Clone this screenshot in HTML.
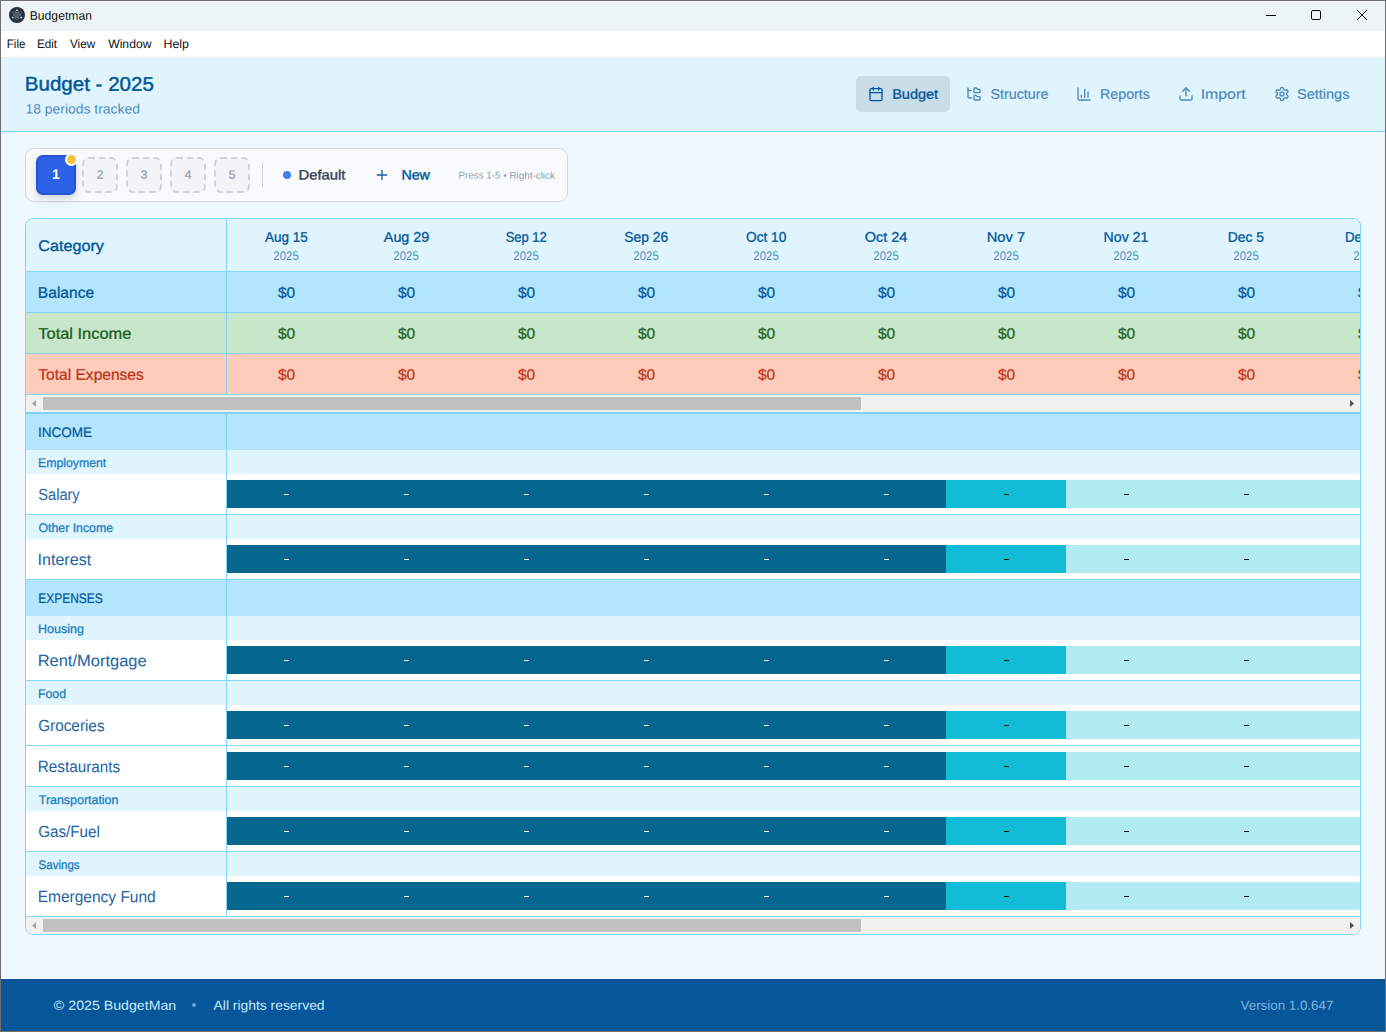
<!DOCTYPE html>
<html><head><meta charset="utf-8"><title>Budgetman</title>
<style>
html,body{margin:0;padding:0}
body{width:1386px;height:1032px;position:relative;overflow:hidden;background:#f0f8ff;font-family:"Liberation Sans",sans-serif}
div,svg,span{position:absolute}
text{white-space:pre}
</style></head><body>
<div style="left:0px;top:0px;width:1386px;height:1032px;background:#6f6f6f;"></div>
<div style="left:1px;top:1px;width:1384px;height:30px;background:#ecf4f8;"></div>
<div style="left:1px;top:1px;width:1384px;height:1px;background:#f2f8fb;"></div>
<div style="left:1px;top:1px;width:1px;height:30px;background:#f1f7fb;"></div>
<div style="left:1384px;top:1px;width:1px;height:30px;background:#f1f7fb;"></div>
<div style="left:1px;top:31px;width:1384px;height:26px;background:#ffffff;"></div>
<div style="left:1px;top:57px;width:1384px;height:74px;background:#e0f4fd;"></div>
<div style="left:1px;top:131px;width:1384px;height:1px;background:#81d4fa;"></div>
<div style="left:1px;top:132px;width:1384px;height:847px;background:#f0f8ff;"></div>
<div style="left:1px;top:979px;width:1384px;height:52px;background:#065699;"></div>
<svg style="left:9px;top:7px" width="16" height="16" viewBox="0 0 16 16">
<circle cx="8" cy="8" r="8" fill="#2b2d3a"/>
<g fill="none" stroke="#8fbfca" stroke-width="0.55" opacity="0.7">
<ellipse cx="8" cy="8" rx="5.1" ry="1.9" transform="rotate(30 8 8)"/>
<ellipse cx="8" cy="8" rx="5.1" ry="1.9" transform="rotate(90 8 8)"/>
<ellipse cx="8" cy="8" rx="5.1" ry="1.9" transform="rotate(150 8 8)"/>
</g><g fill="#bfe9f2"><circle cx="7.9" cy="3.3" r="0.85"/><circle cx="3.7" cy="10.5" r="0.85"/><circle cx="12.3" cy="10.6" r="0.85"/></g>
<circle cx="8" cy="8" r="0.75" fill="#7fa9b4"/></svg>
<svg style="left:1260px;top:5px" width="120" height="22" viewBox="0 0 120 22" fill="none" stroke="#000" stroke-width="1"><path d="M6 10.5h10"/><rect x="51.5" y="5.5" width="9" height="9" rx="1.3"/><path d="M97 5l10 10M107 5l-10 10"/></svg>
<div style="left:856px;top:76px;width:94px;height:36px;background:#c9dde8;border-radius:5px;"></div>
<svg style="left:868px;top:86px" width="16" height="16" viewBox="0 0 24 24" fill="none" stroke="#01579b" stroke-width="2" stroke-linecap="round" stroke-linejoin="round"><path d="M8 2v4"/><path d="M16 2v4"/><rect width="18" height="18" x="3" y="4" rx="2"/><path d="M3 10h18"/></svg>
<svg style="left:966px;top:86px" width="16" height="16" viewBox="0 0 24 24" fill="none" stroke="#4a89c0" stroke-width="2" stroke-linecap="round" stroke-linejoin="round"><path d="M20 10a1 1 0 0 0 1-1V6a1 1 0 0 0-1-1h-2.5a1 1 0 0 1-.8-.4l-.9-1.2A1 1 0 0 0 15 3h-2a1 1 0 0 0-1 1v5a1 1 0 0 0 1 1Z"/><path d="M20 21a1 1 0 0 0 1-1v-3a1 1 0 0 0-1-1h-2.9a1 1 0 0 1-.88-.55l-.42-.85a1 1 0 0 0-.92-.6H13a1 1 0 0 0-1 1v5a1 1 0 0 0 1 1Z"/><path d="M3 5a2 2 0 0 0 2 2h3"/><path d="M3 3v13a2 2 0 0 0 2 2h3"/></svg>
<svg style="left:1076px;top:86px" width="16" height="16" viewBox="0 0 24 24" fill="none" stroke="#4a89c0" stroke-width="2" stroke-linecap="round" stroke-linejoin="round"><path d="M3 3v16a2 2 0 0 0 2 2h16"/><path d="M18 17V9"/><path d="M13 17V5"/><path d="M8 17v-3"/></svg>
<svg style="left:1178px;top:86px" width="16" height="16" viewBox="0 0 24 24" fill="none" stroke="#4a89c0" stroke-width="2" stroke-linecap="round" stroke-linejoin="round"><path d="M21 15v4a2 2 0 0 1-2 2H5a2 2 0 0 1-2-2v-4"/><polyline points="17 8 12 3 7 8"/><line x1="12" x2="12" y1="3" y2="15"/></svg>
<svg style="left:1274px;top:86px" width="16" height="16" viewBox="0 0 24 24" fill="none" stroke="#4a89c0" stroke-width="2" stroke-linecap="round" stroke-linejoin="round"><path d="M12.22 2h-.44a2 2 0 0 0-2 2v.18a2 2 0 0 1-1 1.73l-.43.25a2 2 0 0 1-2 0l-.15-.08a2 2 0 0 0-2.73.73l-.22.38a2 2 0 0 0 .73 2.73l.15.1a2 2 0 0 1 1 1.72v.51a2 2 0 0 1-1 1.74l-.15.09a2 2 0 0 0-.73 2.73l.22.38a2 2 0 0 0 2.73.73l.15-.08a2 2 0 0 1 2 0l.43.25a2 2 0 0 1 1 1.73V20a2 2 0 0 0 2 2h.44a2 2 0 0 0 2-2v-.18a2 2 0 0 1 1-1.73l.43-.25a2 2 0 0 1 2 0l.15.08a2 2 0 0 0 2.73-.73l.22-.39a2 2 0 0 0-.73-2.73l-.15-.08a2 2 0 0 1-1-1.74v-.5a2 2 0 0 1 1-1.74l.15-.09a2 2 0 0 0 .73-2.73l-.22-.38a2 2 0 0 0-2.73-.73l-.15.08a2 2 0 0 1-2 0l-.43-.25a2 2 0 0 1-1-1.73V4a2 2 0 0 0-2-2z"/><circle cx="12" cy="12" r="3"/></svg>
<div style="left:25px;top:148px;width:543px;height:54px;background:#f8fafc;border:1px solid #d5dae1;border-radius:9px;box-sizing:border-box;"></div>
<div style="left:36px;top:155px;width:40px;height:40px;background:#2b62e6;border:2px solid #2453d8;border-radius:7px;box-sizing:border-box;box-shadow:0 5px 12px rgba(30,40,70,.12),0 2px 4px rgba(30,40,70,.07);"></div>
<div style="left:64.8px;top:152.9px;width:13.200000000000003px;height:13.199999999999989px;background:#f2c53d;border:2.2px solid #fff;border-radius:50%;box-sizing:border-box;"></div>
<div style="left:82px;top:157px;width:36px;height:36px;background:#f3f4f6;border:2px dashed #cfd3da;border-radius:7px;box-sizing:border-box;"></div>
<div style="left:126px;top:157px;width:36px;height:36px;background:#f3f4f6;border:2px dashed #cfd3da;border-radius:7px;box-sizing:border-box;"></div>
<div style="left:170px;top:157px;width:36px;height:36px;background:#f3f4f6;border:2px dashed #cfd3da;border-radius:7px;box-sizing:border-box;"></div>
<div style="left:214px;top:157px;width:36px;height:36px;background:#f3f4f6;border:2px dashed #cfd3da;border-radius:7px;box-sizing:border-box;"></div>
<div style="left:262px;top:163px;width:1px;height:24px;background:#d1d5db;"></div>
<div style="left:283px;top:171px;width:8px;height:8px;background:#3b82f6;border-radius:50%;"></div>
<svg style="left:374px;top:167px" width="16" height="16" viewBox="0 0 24 24" fill="none" stroke="#1a5c9c" stroke-width="2" stroke-linecap="round" stroke-linejoin="round"><path d="M5 12h14"/><path d="M12 5v14"/></svg>
<svg class="tl" style="left:0;top:0" width="1386" height="1032"><text id="t1" x="29.70" y="19.80" font-size="12.2" fill="#111" transform="rotate(0.04 29.7 19.8)">Budgetman</text><text id="t2" x="6.75" y="48.00" font-size="12.2" fill="#111" transform="rotate(0.04 6.7 48.0)" textLength="18.67" lengthAdjust="spacingAndGlyphs">File</text><text id="t3" x="36.94" y="48.00" font-size="12.2" fill="#111" transform="rotate(0.04 36.9 48.0)" textLength="20.15" lengthAdjust="spacingAndGlyphs">Edit</text><text id="t4" x="69.95" y="48.00" font-size="12.2" fill="#111" transform="rotate(0.04 69.9 48.0)" textLength="25.22" lengthAdjust="spacingAndGlyphs">View</text><text id="t5" x="108.15" y="48.00" font-size="12.2" fill="#111" transform="rotate(0.04 108.1 48.0)">Window</text><text id="t6" x="163.48" y="48.00" font-size="12.2" fill="#111" transform="rotate(0.04 163.5 48.0)" textLength="25.44" lengthAdjust="spacingAndGlyphs">Help</text><text id="t7" x="24.85" y="90.60" font-size="19.8" fill="#01579b" transform="rotate(0.04 24.8 90.6)" stroke="#01579b" stroke-width="0.45" textLength="128.98" lengthAdjust="spacingAndGlyphs">Budget - 2025</text><text id="t8" x="25.54" y="113.40" font-size="13.5" fill="#4f8bc1" transform="rotate(0.04 25.5 113.4)" textLength="114.35" lengthAdjust="spacingAndGlyphs">18 periods tracked</text><text id="t9" x="892.18" y="98.80" font-size="13.7" fill="#01579b" transform="rotate(0.04 892.2 98.8)" stroke="#01579b" stroke-width="0.32" textLength="45.96" lengthAdjust="spacingAndGlyphs">Budget</text><text id="t10" x="990.45" y="98.80" font-size="13.8" fill="#4a89c0" transform="rotate(0.04 990.5 98.8)" stroke="#4a89c0" stroke-width="0.2" textLength="58.08" lengthAdjust="spacingAndGlyphs">Structure</text><text id="t11" x="1100.14" y="98.80" font-size="13.8" fill="#4a89c0" transform="rotate(0.04 1100.1 98.8)" stroke="#4a89c0" stroke-width="0.2" textLength="49.67" lengthAdjust="spacingAndGlyphs">Reports</text><text id="t12" x="1200.65" y="98.80" font-size="13.8" fill="#4a89c0" transform="rotate(0.04 1200.7 98.8)" stroke="#4a89c0" stroke-width="0.2" textLength="44.95" lengthAdjust="spacingAndGlyphs">Import</text><text id="t13" x="1297.05" y="98.80" font-size="13.8" fill="#4a89c0" transform="rotate(0.04 1297.0 98.8)" stroke="#4a89c0" stroke-width="0.2" textLength="52.37" lengthAdjust="spacingAndGlyphs">Settings</text><text id="t14" x="51.89" y="179.00" font-size="13.9" fill="#fff" transform="rotate(0.04 51.9 179.0)" font-weight="700">1</text><text id="t15" x="96.64" y="178.80" font-size="12.1" fill="#9ca3af" transform="rotate(0.04 96.6 178.8)" stroke="#9ca3af" stroke-width="0.3">2</text><text id="t16" x="140.67" y="178.80" font-size="12.1" fill="#9ca3af" transform="rotate(0.04 140.7 178.8)" stroke="#9ca3af" stroke-width="0.3">3</text><text id="t17" x="184.68" y="178.80" font-size="12.1" fill="#9ca3af" transform="rotate(0.04 184.7 178.8)" stroke="#9ca3af" stroke-width="0.3">4</text><text id="t18" x="228.65" y="178.80" font-size="12.1" fill="#9ca3af" transform="rotate(0.04 228.6 178.8)" stroke="#9ca3af" stroke-width="0.3">5</text><text id="t19" x="298.59" y="179.50" font-size="13.7" fill="#374151" transform="rotate(0.04 298.6 179.5)" stroke="#374151" stroke-width="0.38" textLength="46.81" lengthAdjust="spacingAndGlyphs">Default</text><text id="t20" x="401.43" y="179.50" font-size="13.7" fill="#01579b" transform="rotate(0.04 401.4 179.5)" stroke="#01579b" stroke-width="0.38" textLength="28.44" lengthAdjust="spacingAndGlyphs">New</text><text id="t21" x="458.49" y="178.60" font-size="9.8" fill="#979eab" transform="rotate(0.04 458.5 178.6)" textLength="96.39" lengthAdjust="spacingAndGlyphs">Press 1-5 • Right-click</text></svg>
<div style="left:25px;top:218px;width:1336px;height:717px;border:1px solid #81d4fa;border-radius:8px;box-sizing:border-box;overflow:hidden;background:#fff">
<div style="left:-26px;top:-219px;width:1386px;height:1032px">
<div style="left:26px;top:219px;width:1334px;height:52px;background:#e0f4fd;"></div>
<div style="left:26px;top:271px;width:1334px;height:1px;background:#81d4fa;"></div>
<div style="left:26px;top:272px;width:1334px;height:40px;background:#b3e5fc;"></div>
<div style="left:26px;top:312px;width:1334px;height:1px;background:#81d4fa;"></div>
<div style="left:26px;top:313px;width:1334px;height:40px;background:#c8e6c9;"></div>
<div style="left:26px;top:353px;width:1334px;height:1px;background:#81d4fa;"></div>
<div style="left:26px;top:354px;width:1334px;height:40px;background:#ffccbc;"></div>
<div style="left:26px;top:394px;width:1334px;height:1px;background:#81d4fa;"></div>
<div style="left:26px;top:395px;width:1334px;height:17px;background:#f1f1f1;"></div>
<div style="left:43px;top:397px;width:818px;height:13px;background:#c1c1c1;"></div>
<svg style="left:31px;top:399px" width="6" height="9" viewBox="0 0 6 9"><path d="M5 1v7L1 4.5z" fill="#a3a3a3"/></svg>
<svg style="left:1349px;top:399px" width="6" height="9" viewBox="0 0 6 9"><path d="M1 1v7L5 4.5z" fill="#505050"/></svg>
<div style="left:26px;top:412px;width:1334px;height:2px;background:#7fd3f8;"></div>
<div style="left:26px;top:414px;width:1334px;height:36px;background:#b3e5fc;"></div>
<div style="left:26px;top:450px;width:1334px;height:24px;background:#e1f5fe;"></div>
<div style="left:26px;top:474px;width:1334px;height:40px;background:#fff;"></div>
<div style="left:227px;top:480px;width:719px;height:28px;background:#06688f;"></div>
<div style="left:946px;top:480px;width:120px;height:28px;background:#12bbd6;"></div>
<div style="left:1066px;top:480px;width:294px;height:28px;background:#b2ebf2;"></div>
<div style="left:284px;top:494px;width:5px;height:1px;background:#f6fbfd;"></div>
<div style="left:404px;top:494px;width:5px;height:1px;background:#f6fbfd;"></div>
<div style="left:524px;top:494px;width:5px;height:1px;background:#f6fbfd;"></div>
<div style="left:644px;top:494px;width:5px;height:1px;background:#f6fbfd;"></div>
<div style="left:764px;top:494px;width:5px;height:1px;background:#f6fbfd;"></div>
<div style="left:884px;top:494px;width:5px;height:1px;background:#f6fbfd;"></div>
<div style="left:1004px;top:494px;width:4.600000000000023px;height:1px;background:#06181c;"></div>
<div style="left:1124px;top:494px;width:4.599999999999909px;height:1px;background:#06181c;"></div>
<div style="left:1244px;top:494px;width:4.599999999999909px;height:1px;background:#06181c;"></div>
<div style="left:1364px;top:494px;width:4.599999999999909px;height:1px;background:#06181c;"></div>
<div style="left:26px;top:514px;width:1334px;height:1px;background:#81d4fa;"></div>
<div style="left:26px;top:515px;width:1334px;height:24px;background:#e1f5fe;"></div>
<div style="left:26px;top:539px;width:1334px;height:40px;background:#fff;"></div>
<div style="left:227px;top:545px;width:719px;height:28px;background:#06688f;"></div>
<div style="left:946px;top:545px;width:120px;height:28px;background:#12bbd6;"></div>
<div style="left:1066px;top:545px;width:294px;height:28px;background:#b2ebf2;"></div>
<div style="left:284px;top:559px;width:5px;height:1px;background:#f6fbfd;"></div>
<div style="left:404px;top:559px;width:5px;height:1px;background:#f6fbfd;"></div>
<div style="left:524px;top:559px;width:5px;height:1px;background:#f6fbfd;"></div>
<div style="left:644px;top:559px;width:5px;height:1px;background:#f6fbfd;"></div>
<div style="left:764px;top:559px;width:5px;height:1px;background:#f6fbfd;"></div>
<div style="left:884px;top:559px;width:5px;height:1px;background:#f6fbfd;"></div>
<div style="left:1004px;top:559px;width:4.600000000000023px;height:1px;background:#06181c;"></div>
<div style="left:1124px;top:559px;width:4.599999999999909px;height:1px;background:#06181c;"></div>
<div style="left:1244px;top:559px;width:4.599999999999909px;height:1px;background:#06181c;"></div>
<div style="left:1364px;top:559px;width:4.599999999999909px;height:1px;background:#06181c;"></div>
<div style="left:26px;top:579px;width:1334px;height:1px;background:#81d4fa;"></div>
<div style="left:26px;top:580px;width:1334px;height:36px;background:#b3e5fc;"></div>
<div style="left:26px;top:616px;width:1334px;height:24px;background:#e1f5fe;"></div>
<div style="left:26px;top:640px;width:1334px;height:40px;background:#fff;"></div>
<div style="left:227px;top:646px;width:719px;height:28px;background:#06688f;"></div>
<div style="left:946px;top:646px;width:120px;height:28px;background:#12bbd6;"></div>
<div style="left:1066px;top:646px;width:294px;height:28px;background:#b2ebf2;"></div>
<div style="left:284px;top:660px;width:5px;height:1px;background:#f6fbfd;"></div>
<div style="left:404px;top:660px;width:5px;height:1px;background:#f6fbfd;"></div>
<div style="left:524px;top:660px;width:5px;height:1px;background:#f6fbfd;"></div>
<div style="left:644px;top:660px;width:5px;height:1px;background:#f6fbfd;"></div>
<div style="left:764px;top:660px;width:5px;height:1px;background:#f6fbfd;"></div>
<div style="left:884px;top:660px;width:5px;height:1px;background:#f6fbfd;"></div>
<div style="left:1004px;top:660px;width:4.600000000000023px;height:1px;background:#06181c;"></div>
<div style="left:1124px;top:660px;width:4.599999999999909px;height:1px;background:#06181c;"></div>
<div style="left:1244px;top:660px;width:4.599999999999909px;height:1px;background:#06181c;"></div>
<div style="left:1364px;top:660px;width:4.599999999999909px;height:1px;background:#06181c;"></div>
<div style="left:26px;top:680px;width:1334px;height:1px;background:#81d4fa;"></div>
<div style="left:26px;top:681px;width:1334px;height:24px;background:#e1f5fe;"></div>
<div style="left:26px;top:705px;width:1334px;height:40px;background:#fff;"></div>
<div style="left:227px;top:711px;width:719px;height:28px;background:#06688f;"></div>
<div style="left:946px;top:711px;width:120px;height:28px;background:#12bbd6;"></div>
<div style="left:1066px;top:711px;width:294px;height:28px;background:#b2ebf2;"></div>
<div style="left:284px;top:725px;width:5px;height:1px;background:#f6fbfd;"></div>
<div style="left:404px;top:725px;width:5px;height:1px;background:#f6fbfd;"></div>
<div style="left:524px;top:725px;width:5px;height:1px;background:#f6fbfd;"></div>
<div style="left:644px;top:725px;width:5px;height:1px;background:#f6fbfd;"></div>
<div style="left:764px;top:725px;width:5px;height:1px;background:#f6fbfd;"></div>
<div style="left:884px;top:725px;width:5px;height:1px;background:#f6fbfd;"></div>
<div style="left:1004px;top:725px;width:4.600000000000023px;height:1px;background:#06181c;"></div>
<div style="left:1124px;top:725px;width:4.599999999999909px;height:1px;background:#06181c;"></div>
<div style="left:1244px;top:725px;width:4.599999999999909px;height:1px;background:#06181c;"></div>
<div style="left:1364px;top:725px;width:4.599999999999909px;height:1px;background:#06181c;"></div>
<div style="left:26px;top:745px;width:1334px;height:1px;background:#81d4fa;"></div>
<div style="left:26px;top:746px;width:1334px;height:40px;background:#fff;"></div>
<div style="left:227px;top:752px;width:719px;height:28px;background:#06688f;"></div>
<div style="left:946px;top:752px;width:120px;height:28px;background:#12bbd6;"></div>
<div style="left:1066px;top:752px;width:294px;height:28px;background:#b2ebf2;"></div>
<div style="left:284px;top:766px;width:5px;height:1px;background:#f6fbfd;"></div>
<div style="left:404px;top:766px;width:5px;height:1px;background:#f6fbfd;"></div>
<div style="left:524px;top:766px;width:5px;height:1px;background:#f6fbfd;"></div>
<div style="left:644px;top:766px;width:5px;height:1px;background:#f6fbfd;"></div>
<div style="left:764px;top:766px;width:5px;height:1px;background:#f6fbfd;"></div>
<div style="left:884px;top:766px;width:5px;height:1px;background:#f6fbfd;"></div>
<div style="left:1004px;top:766px;width:4.600000000000023px;height:1px;background:#06181c;"></div>
<div style="left:1124px;top:766px;width:4.599999999999909px;height:1px;background:#06181c;"></div>
<div style="left:1244px;top:766px;width:4.599999999999909px;height:1px;background:#06181c;"></div>
<div style="left:1364px;top:766px;width:4.599999999999909px;height:1px;background:#06181c;"></div>
<div style="left:26px;top:786px;width:1334px;height:1px;background:#81d4fa;"></div>
<div style="left:26px;top:787px;width:1334px;height:24px;background:#e1f5fe;"></div>
<div style="left:26px;top:811px;width:1334px;height:40px;background:#fff;"></div>
<div style="left:227px;top:817px;width:719px;height:28px;background:#06688f;"></div>
<div style="left:946px;top:817px;width:120px;height:28px;background:#12bbd6;"></div>
<div style="left:1066px;top:817px;width:294px;height:28px;background:#b2ebf2;"></div>
<div style="left:284px;top:831px;width:5px;height:1px;background:#f6fbfd;"></div>
<div style="left:404px;top:831px;width:5px;height:1px;background:#f6fbfd;"></div>
<div style="left:524px;top:831px;width:5px;height:1px;background:#f6fbfd;"></div>
<div style="left:644px;top:831px;width:5px;height:1px;background:#f6fbfd;"></div>
<div style="left:764px;top:831px;width:5px;height:1px;background:#f6fbfd;"></div>
<div style="left:884px;top:831px;width:5px;height:1px;background:#f6fbfd;"></div>
<div style="left:1004px;top:831px;width:4.600000000000023px;height:1px;background:#06181c;"></div>
<div style="left:1124px;top:831px;width:4.599999999999909px;height:1px;background:#06181c;"></div>
<div style="left:1244px;top:831px;width:4.599999999999909px;height:1px;background:#06181c;"></div>
<div style="left:1364px;top:831px;width:4.599999999999909px;height:1px;background:#06181c;"></div>
<div style="left:26px;top:851px;width:1334px;height:1px;background:#81d4fa;"></div>
<div style="left:26px;top:852px;width:1334px;height:24px;background:#e1f5fe;"></div>
<div style="left:26px;top:876px;width:1334px;height:40px;background:#fff;"></div>
<div style="left:227px;top:882px;width:719px;height:28px;background:#06688f;"></div>
<div style="left:946px;top:882px;width:120px;height:28px;background:#12bbd6;"></div>
<div style="left:1066px;top:882px;width:294px;height:28px;background:#b2ebf2;"></div>
<div style="left:284px;top:896px;width:5px;height:1px;background:#f6fbfd;"></div>
<div style="left:404px;top:896px;width:5px;height:1px;background:#f6fbfd;"></div>
<div style="left:524px;top:896px;width:5px;height:1px;background:#f6fbfd;"></div>
<div style="left:644px;top:896px;width:5px;height:1px;background:#f6fbfd;"></div>
<div style="left:764px;top:896px;width:5px;height:1px;background:#f6fbfd;"></div>
<div style="left:884px;top:896px;width:5px;height:1px;background:#f6fbfd;"></div>
<div style="left:1004px;top:896px;width:4.600000000000023px;height:1px;background:#06181c;"></div>
<div style="left:1124px;top:896px;width:4.599999999999909px;height:1px;background:#06181c;"></div>
<div style="left:1244px;top:896px;width:4.599999999999909px;height:1px;background:#06181c;"></div>
<div style="left:1364px;top:896px;width:4.599999999999909px;height:1px;background:#06181c;"></div>
<div style="left:26px;top:916px;width:1334px;height:1px;background:#81d4fa;"></div>
<div style="left:226px;top:219px;width:1px;height:176px;background:#81d4fa;"></div>
<div style="left:226px;top:414px;width:1px;height:503px;background:#81d4fa;"></div>
<div style="left:26px;top:917px;width:1334px;height:17px;background:#f1f1f1;"></div>
<div style="left:43px;top:919px;width:818px;height:13px;background:#c1c1c1;"></div>
<svg style="left:31px;top:921px" width="6" height="9" viewBox="0 0 6 9"><path d="M5 1v7L1 4.5z" fill="#a3a3a3"/></svg>
<svg style="left:1349px;top:921px" width="6" height="9" viewBox="0 0 6 9"><path d="M1 1v7L5 4.5z" fill="#505050"/></svg>
<svg class="tl" style="left:0;top:0" width="1386" height="1032"><text id="t22" x="38.25" y="251.00" font-size="15.4" fill="#01579b" transform="rotate(0.04 38.3 251.0)" stroke="#01579b" stroke-width="0.33" textLength="65.71" lengthAdjust="spacingAndGlyphs">Category</text><text id="t23" x="265.12" y="241.70" font-size="14.0" fill="#01579b" transform="rotate(0.04 265.1 241.7)" stroke="#01579b" stroke-width="0.3" textLength="42.70" lengthAdjust="spacingAndGlyphs">Aug 15</text><text id="t24" x="273.33" y="260.00" font-size="12.5" fill="#4f8bc1" transform="rotate(0.04 273.3 260.0)" textLength="25.44" lengthAdjust="spacingAndGlyphs">2025</text><text id="t25" x="383.83" y="241.70" font-size="14.0" fill="#01579b" transform="rotate(0.04 383.8 241.7)" stroke="#01579b" stroke-width="0.3" textLength="45.40" lengthAdjust="spacingAndGlyphs">Aug 29</text><text id="t26" x="393.33" y="260.00" font-size="12.5" fill="#4f8bc1" transform="rotate(0.04 393.3 260.0)" textLength="25.44" lengthAdjust="spacingAndGlyphs">2025</text><text id="t27" x="505.65" y="241.70" font-size="14.0" fill="#01579b" transform="rotate(0.04 505.6 241.7)" stroke="#01579b" stroke-width="0.3" textLength="41.16" lengthAdjust="spacingAndGlyphs">Sep 12</text><text id="t28" x="513.33" y="260.00" font-size="12.5" fill="#4f8bc1" transform="rotate(0.04 513.3 260.0)" textLength="25.44" lengthAdjust="spacingAndGlyphs">2025</text><text id="t29" x="624.27" y="241.70" font-size="14.0" fill="#01579b" transform="rotate(0.04 624.3 241.7)" stroke="#01579b" stroke-width="0.3" textLength="43.84" lengthAdjust="spacingAndGlyphs">Sep 26</text><text id="t30" x="633.33" y="260.00" font-size="12.5" fill="#4f8bc1" transform="rotate(0.04 633.3 260.0)" textLength="25.44" lengthAdjust="spacingAndGlyphs">2025</text><text id="t31" x="746.00" y="241.70" font-size="14.0" fill="#01579b" transform="rotate(0.04 746.0 241.7)" stroke="#01579b" stroke-width="0.3" textLength="40.29" lengthAdjust="spacingAndGlyphs">Oct 10</text><text id="t32" x="753.33" y="260.00" font-size="12.5" fill="#4f8bc1" transform="rotate(0.04 753.3 260.0)" textLength="25.44" lengthAdjust="spacingAndGlyphs">2025</text><text id="t33" x="864.67" y="241.70" font-size="14.0" fill="#01579b" transform="rotate(0.04 864.7 241.7)" stroke="#01579b" stroke-width="0.3" textLength="42.80" lengthAdjust="spacingAndGlyphs">Oct 24</text><text id="t34" x="873.33" y="260.00" font-size="12.5" fill="#4f8bc1" transform="rotate(0.04 873.3 260.0)" textLength="25.44" lengthAdjust="spacingAndGlyphs">2025</text><text id="t35" x="986.75" y="241.70" font-size="14.0" fill="#01579b" transform="rotate(0.04 986.8 241.7)" stroke="#01579b" stroke-width="0.3" textLength="38.43" lengthAdjust="spacingAndGlyphs">Nov 7</text><text id="t36" x="993.33" y="260.00" font-size="12.5" fill="#4f8bc1" transform="rotate(0.04 993.3 260.0)" textLength="25.44" lengthAdjust="spacingAndGlyphs">2025</text><text id="t37" x="1103.59" y="241.70" font-size="14.0" fill="#01579b" transform="rotate(0.04 1103.6 241.7)" stroke="#01579b" stroke-width="0.3" textLength="44.75" lengthAdjust="spacingAndGlyphs">Nov 21</text><text id="t38" x="1113.33" y="260.00" font-size="12.5" fill="#4f8bc1" transform="rotate(0.04 1113.3 260.0)" textLength="25.44" lengthAdjust="spacingAndGlyphs">2025</text><text id="t39" x="1227.81" y="241.70" font-size="14.0" fill="#01579b" transform="rotate(0.04 1227.8 241.7)" stroke="#01579b" stroke-width="0.3" textLength="36.22" lengthAdjust="spacingAndGlyphs">Dec 5</text><text id="t40" x="1233.33" y="260.00" font-size="12.5" fill="#4f8bc1" transform="rotate(0.04 1233.3 260.0)" textLength="25.44" lengthAdjust="spacingAndGlyphs">2025</text><text id="t41" x="1344.95" y="241.70" font-size="14.0" fill="#01579b" transform="rotate(0.04 1345.0 241.7)" stroke="#01579b" stroke-width="0.3" textLength="42.03" lengthAdjust="spacingAndGlyphs">Dec 19</text><text id="t42" x="1353.33" y="260.00" font-size="12.5" fill="#4f8bc1" transform="rotate(0.04 1353.3 260.0)" textLength="25.44" lengthAdjust="spacingAndGlyphs">2025</text><text id="t43" x="37.87" y="297.80" font-size="15.4" fill="#01579b" transform="rotate(0.04 37.9 297.8)" stroke="#01579b" stroke-width="0.3" textLength="56.27" lengthAdjust="spacingAndGlyphs">Balance</text><text id="t44" x="277.96" y="297.80" font-size="15.2" fill="#01579b" transform="rotate(0.04 278.0 297.8)" stroke="#01579b" stroke-width="0.24" textLength="17.23" lengthAdjust="spacingAndGlyphs">$0</text><text id="t45" x="397.96" y="297.80" font-size="15.2" fill="#01579b" transform="rotate(0.04 398.0 297.8)" stroke="#01579b" stroke-width="0.24" textLength="17.23" lengthAdjust="spacingAndGlyphs">$0</text><text id="t46" x="517.96" y="297.80" font-size="15.2" fill="#01579b" transform="rotate(0.04 518.0 297.8)" stroke="#01579b" stroke-width="0.24" textLength="17.23" lengthAdjust="spacingAndGlyphs">$0</text><text id="t47" x="637.96" y="297.80" font-size="15.2" fill="#01579b" transform="rotate(0.04 638.0 297.8)" stroke="#01579b" stroke-width="0.24" textLength="17.23" lengthAdjust="spacingAndGlyphs">$0</text><text id="t48" x="757.96" y="297.80" font-size="15.2" fill="#01579b" transform="rotate(0.04 758.0 297.8)" stroke="#01579b" stroke-width="0.24" textLength="17.23" lengthAdjust="spacingAndGlyphs">$0</text><text id="t49" x="877.96" y="297.80" font-size="15.2" fill="#01579b" transform="rotate(0.04 878.0 297.8)" stroke="#01579b" stroke-width="0.24" textLength="17.23" lengthAdjust="spacingAndGlyphs">$0</text><text id="t50" x="997.96" y="297.80" font-size="15.2" fill="#01579b" transform="rotate(0.04 998.0 297.8)" stroke="#01579b" stroke-width="0.24" textLength="17.23" lengthAdjust="spacingAndGlyphs">$0</text><text id="t51" x="1117.96" y="297.80" font-size="15.2" fill="#01579b" transform="rotate(0.04 1118.0 297.8)" stroke="#01579b" stroke-width="0.24" textLength="17.23" lengthAdjust="spacingAndGlyphs">$0</text><text id="t52" x="1237.96" y="297.80" font-size="15.2" fill="#01579b" transform="rotate(0.04 1238.0 297.8)" stroke="#01579b" stroke-width="0.24" textLength="17.23" lengthAdjust="spacingAndGlyphs">$0</text><text id="t53" x="1357.96" y="297.80" font-size="15.2" fill="#01579b" transform="rotate(0.04 1358.0 297.8)" stroke="#01579b" stroke-width="0.24" textLength="17.23" lengthAdjust="spacingAndGlyphs">$0</text><text id="t54" x="38.29" y="338.80" font-size="15.4" fill="#1b5e20" transform="rotate(0.04 38.3 338.8)" stroke="#1b5e20" stroke-width="0.3" textLength="93.18" lengthAdjust="spacingAndGlyphs">Total Income</text><text id="t55" x="277.96" y="338.80" font-size="15.2" fill="#1b5e20" transform="rotate(0.04 278.0 338.8)" stroke="#1b5e20" stroke-width="0.24" textLength="17.23" lengthAdjust="spacingAndGlyphs">$0</text><text id="t56" x="397.96" y="338.80" font-size="15.2" fill="#1b5e20" transform="rotate(0.04 398.0 338.8)" stroke="#1b5e20" stroke-width="0.24" textLength="17.23" lengthAdjust="spacingAndGlyphs">$0</text><text id="t57" x="517.96" y="338.80" font-size="15.2" fill="#1b5e20" transform="rotate(0.04 518.0 338.8)" stroke="#1b5e20" stroke-width="0.24" textLength="17.23" lengthAdjust="spacingAndGlyphs">$0</text><text id="t58" x="637.96" y="338.80" font-size="15.2" fill="#1b5e20" transform="rotate(0.04 638.0 338.8)" stroke="#1b5e20" stroke-width="0.24" textLength="17.23" lengthAdjust="spacingAndGlyphs">$0</text><text id="t59" x="757.96" y="338.80" font-size="15.2" fill="#1b5e20" transform="rotate(0.04 758.0 338.8)" stroke="#1b5e20" stroke-width="0.24" textLength="17.23" lengthAdjust="spacingAndGlyphs">$0</text><text id="t60" x="877.96" y="338.80" font-size="15.2" fill="#1b5e20" transform="rotate(0.04 878.0 338.8)" stroke="#1b5e20" stroke-width="0.24" textLength="17.23" lengthAdjust="spacingAndGlyphs">$0</text><text id="t61" x="997.96" y="338.80" font-size="15.2" fill="#1b5e20" transform="rotate(0.04 998.0 338.8)" stroke="#1b5e20" stroke-width="0.24" textLength="17.23" lengthAdjust="spacingAndGlyphs">$0</text><text id="t62" x="1117.96" y="338.80" font-size="15.2" fill="#1b5e20" transform="rotate(0.04 1118.0 338.8)" stroke="#1b5e20" stroke-width="0.24" textLength="17.23" lengthAdjust="spacingAndGlyphs">$0</text><text id="t63" x="1237.96" y="338.80" font-size="15.2" fill="#1b5e20" transform="rotate(0.04 1238.0 338.8)" stroke="#1b5e20" stroke-width="0.24" textLength="17.23" lengthAdjust="spacingAndGlyphs">$0</text><text id="t64" x="1357.96" y="338.80" font-size="15.2" fill="#1b5e20" transform="rotate(0.04 1358.0 338.8)" stroke="#1b5e20" stroke-width="0.24" textLength="17.23" lengthAdjust="spacingAndGlyphs">$0</text><text id="t65" x="38.30" y="379.70" font-size="15.4" fill="#bd3618" transform="rotate(0.04 38.3 379.7)" stroke="#bd3618" stroke-width="0.3" textLength="105.51" lengthAdjust="spacingAndGlyphs">Total Expenses</text><text id="t66" x="277.96" y="379.70" font-size="15.2" fill="#bd3618" transform="rotate(0.04 278.0 379.7)" stroke="#bd3618" stroke-width="0.24" textLength="17.23" lengthAdjust="spacingAndGlyphs">$0</text><text id="t67" x="397.96" y="379.70" font-size="15.2" fill="#bd3618" transform="rotate(0.04 398.0 379.7)" stroke="#bd3618" stroke-width="0.24" textLength="17.23" lengthAdjust="spacingAndGlyphs">$0</text><text id="t68" x="517.96" y="379.70" font-size="15.2" fill="#bd3618" transform="rotate(0.04 518.0 379.7)" stroke="#bd3618" stroke-width="0.24" textLength="17.23" lengthAdjust="spacingAndGlyphs">$0</text><text id="t69" x="637.96" y="379.70" font-size="15.2" fill="#bd3618" transform="rotate(0.04 638.0 379.7)" stroke="#bd3618" stroke-width="0.24" textLength="17.23" lengthAdjust="spacingAndGlyphs">$0</text><text id="t70" x="757.96" y="379.70" font-size="15.2" fill="#bd3618" transform="rotate(0.04 758.0 379.7)" stroke="#bd3618" stroke-width="0.24" textLength="17.23" lengthAdjust="spacingAndGlyphs">$0</text><text id="t71" x="877.96" y="379.70" font-size="15.2" fill="#bd3618" transform="rotate(0.04 878.0 379.7)" stroke="#bd3618" stroke-width="0.24" textLength="17.23" lengthAdjust="spacingAndGlyphs">$0</text><text id="t72" x="997.96" y="379.70" font-size="15.2" fill="#bd3618" transform="rotate(0.04 998.0 379.7)" stroke="#bd3618" stroke-width="0.24" textLength="17.23" lengthAdjust="spacingAndGlyphs">$0</text><text id="t73" x="1117.96" y="379.70" font-size="15.2" fill="#bd3618" transform="rotate(0.04 1118.0 379.7)" stroke="#bd3618" stroke-width="0.24" textLength="17.23" lengthAdjust="spacingAndGlyphs">$0</text><text id="t74" x="1237.96" y="379.70" font-size="15.2" fill="#bd3618" transform="rotate(0.04 1238.0 379.7)" stroke="#bd3618" stroke-width="0.24" textLength="17.23" lengthAdjust="spacingAndGlyphs">$0</text><text id="t75" x="1357.96" y="379.70" font-size="15.2" fill="#bd3618" transform="rotate(0.04 1358.0 379.7)" stroke="#bd3618" stroke-width="0.24" textLength="17.23" lengthAdjust="spacingAndGlyphs">$0</text><text id="t76" x="38.06" y="437.00" font-size="13.8" fill="#01579b" transform="rotate(0.04 38.1 437.0)" stroke="#01579b" stroke-width="0.22" textLength="54.01" lengthAdjust="spacingAndGlyphs">INCOME</text><text id="t77" x="38.04" y="467.05" font-size="12.5" fill="#1a7fc4" transform="rotate(0.04 38.0 467.1)" stroke="#1a7fc4" stroke-width="0.3" textLength="68.20" lengthAdjust="spacingAndGlyphs">Employment</text><text id="t78" x="38.34" y="500.10" font-size="16.2" fill="#22639f" transform="rotate(0.04 38.3 500.1)" textLength="41.29" lengthAdjust="spacingAndGlyphs">Salary</text><text id="t79" x="38.46" y="532.05" font-size="12.5" fill="#1a7fc4" transform="rotate(0.04 38.5 532.0)" stroke="#1a7fc4" stroke-width="0.3" textLength="74.64" lengthAdjust="spacingAndGlyphs">Other Income</text><text id="t80" x="37.51" y="565.10" font-size="16.2" fill="#22639f" transform="rotate(0.04 37.5 565.1)" textLength="53.71" lengthAdjust="spacingAndGlyphs">Interest</text><text id="t81" x="38.32" y="603.00" font-size="13.8" fill="#01579b" transform="rotate(0.04 38.3 603.0)" stroke="#01579b" stroke-width="0.22" textLength="64.34" lengthAdjust="spacingAndGlyphs">EXPENSES</text><text id="t82" x="38.03" y="633.05" font-size="12.5" fill="#1a7fc4" transform="rotate(0.04 38.0 633.0)" stroke="#1a7fc4" stroke-width="0.3">Housing</text><text id="t83" x="37.65" y="666.10" font-size="16.2" fill="#22639f" transform="rotate(0.04 37.6 666.1)" textLength="108.99" lengthAdjust="spacingAndGlyphs">Rent/Mortgage</text><text id="t84" x="38.04" y="698.05" font-size="12.5" fill="#1a7fc4" transform="rotate(0.04 38.0 698.0)" stroke="#1a7fc4" stroke-width="0.3" textLength="28.00" lengthAdjust="spacingAndGlyphs">Food</text><text id="t85" x="38.23" y="731.10" font-size="16.2" fill="#22639f" transform="rotate(0.04 38.2 731.1)" textLength="66.32" lengthAdjust="spacingAndGlyphs">Groceries</text><text id="t86" x="37.75" y="772.10" font-size="16.2" fill="#22639f" transform="rotate(0.04 37.7 772.1)" textLength="82.41" lengthAdjust="spacingAndGlyphs">Restaurants</text><text id="t87" x="38.77" y="804.05" font-size="12.5" fill="#1a7fc4" transform="rotate(0.04 38.8 804.0)" stroke="#1a7fc4" stroke-width="0.3" textLength="79.69" lengthAdjust="spacingAndGlyphs">Transportation</text><text id="t88" x="38.24" y="837.10" font-size="16.2" fill="#22639f" transform="rotate(0.04 38.2 837.1)" textLength="61.58" lengthAdjust="spacingAndGlyphs">Gas/Fuel</text><text id="t89" x="38.51" y="869.05" font-size="12.5" fill="#1a7fc4" transform="rotate(0.04 38.5 869.0)" stroke="#1a7fc4" stroke-width="0.3" textLength="41.17" lengthAdjust="spacingAndGlyphs">Savings</text><text id="t90" x="37.73" y="902.10" font-size="16.2" fill="#22639f" transform="rotate(0.04 37.7 902.1)" textLength="117.97" lengthAdjust="spacingAndGlyphs">Emergency Fund</text></svg>
</div></div>
<div style="left:192.2px;top:1003.4px;width:4.0px;height:4.0px;background:#6ba3d6;border-radius:50%;"></div>
<svg class="tl" style="left:0;top:0" width="1386" height="1032"><text id="t91" x="53.89" y="1009.80" font-size="13.1" fill="#c6ecff" transform="rotate(0.04 53.9 1009.8)" textLength="122.34" lengthAdjust="spacingAndGlyphs">© 2025 BudgetMan</text><text id="t92" x="213.57" y="1009.80" font-size="13.1" fill="#c6ecff" transform="rotate(0.04 213.6 1009.8)" textLength="111.02" lengthAdjust="spacingAndGlyphs">All rights reserved</text><text id="t93" x="1240.54" y="1009.80" font-size="13.1" fill="#7fb5e0" transform="rotate(0.04 1240.5 1009.8)" textLength="92.83" lengthAdjust="spacingAndGlyphs">Version 1.0.647</text></svg>
</body></html>
